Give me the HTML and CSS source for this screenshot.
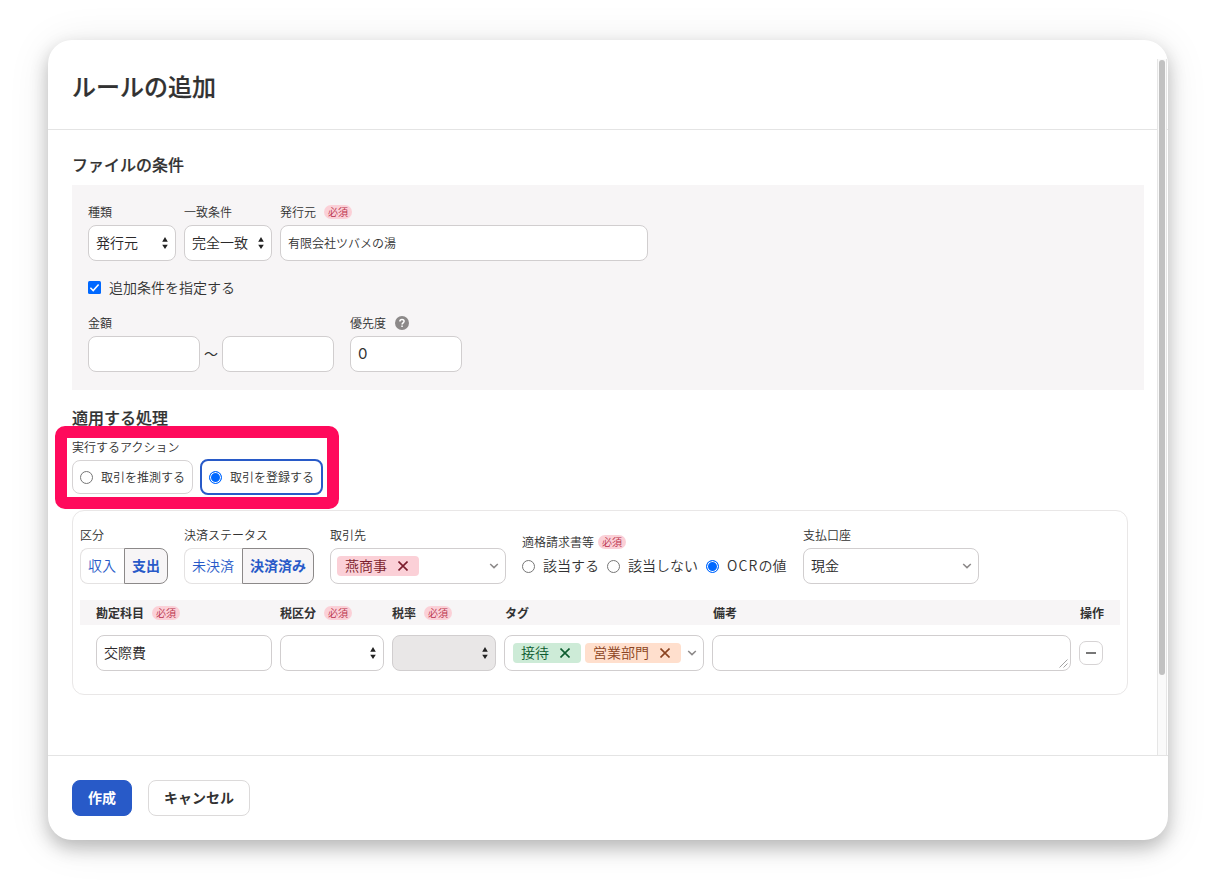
FILE: index.html
```html
<!DOCTYPE html>
<html lang="ja">
<head>
    <meta charset="UTF-8">
    <meta name="viewport" content="width=device-width, initial-scale=1.0">
    <title>ルールの追加</title>
    <link rel="stylesheet" href="styles.css">
</head>
<body>
    <svg width="0" height="0" class="icon-defs">
        <symbol id="sort" viewBox="0 0 6 12"><path d="M3 0L5.8 4.8H.2zM3 12L.2 7.7h5.6z" fill="#222"/></symbol>
        <symbol id="chevron" viewBox="0 0 10 6"><path d="M1.2 1L5 4.6 8.8 1" fill="none" stroke="#8c8989" stroke-width="1.5"/></symbol>
        <symbol id="close" viewBox="0 0 10 10"><path d="M.5.5l9 9M9.5.5l-9 9" fill="none" stroke="currentColor" stroke-width="1.6"/></symbol>
    </svg>

    <div class="modal">
        <div class="modal-header">
            <h1>ルールの追加</h1>
        </div>

        <div class="modal-body">
            <h2>ファイルの条件</h2>
            <div class="conditions">
                <div class="row">
                    <div class="field w88">
                        <div class="label">種類</div>
                        <div class="control select">発行元<svg class="sort"><use href="#sort"/></svg></div>
                    </div>
                    <div class="field w88">
                        <div class="label">一致条件</div>
                        <div class="control select">完全一致<svg class="sort"><use href="#sort"/></svg></div>
                    </div>
                    <div class="field w368">
                        <div class="label">発行元<span class="required">必須</span></div>
                        <div class="control small">有限会社ツバメの湯</div>
                    </div>
                </div>
                <div class="check">
                    <svg class="checkbox" viewBox="0 0 13 13"><rect width="13" height="13" rx="1.5" fill="#0068ff"/><path d="M2.4 6.8l2.8 2.8 5.4-6.2" fill="none" stroke="#fff" stroke-width="1.5"/></svg>
                    追加条件を指定する
                </div>
                <div class="row amount">
                    <div class="field w112">
                        <div class="label">金額</div>
                        <div class="control"></div>
                    </div>
                    <div class="tilde">～</div>
                    <div class="field w112">
                        <div class="label"></div>
                        <div class="control"></div>
                    </div>
                    <div class="field w112 priority">
                        <div class="label">優先度
                            <svg class="help" viewBox="0 0 14 14"><circle cx="7" cy="7" r="7" fill="#8c8989"/><path d="M4.9 5.5c0-1.3.9-2.1 2.1-2.1s2.1.8 2.1 1.9c0 1.5-2 1.6-2 3.1" fill="none" stroke="#fff" stroke-width="1.5"/><rect x="6.3" y="9.5" width="1.5" height="1.5" fill="#fff"/></svg>
                        </div>
                        <div class="control number">0</div>
                    </div>
                </div>
            </div>

            <h2 class="second">適用する処理</h2>
            <div class="action">
                <div class="action-label">実行するアクション</div>
                <div class="action-options">
                    <div class="option"><span class="radio"></span>取引を推測する</div>
                    <div class="option selected"><span class="radio on"></span>取引を登録する</div>
                </div>
                <div class="highlight"></div>
            </div>

            <div class="card">
                <div class="card-row">
                    <div class="field">
                        <div class="label">区分</div>
                        <div class="segment"><span>収入</span><span class="active">支出</span></div>
                    </div>
                    <div class="field">
                        <div class="label">決済ステータス</div>
                        <div class="segment wide"><span>未決済</span><span class="active">決済済み</span></div>
                    </div>
                    <div class="field w176">
                        <div class="label">取引先</div>
                        <div class="control combo">
                            <span class="tag red">燕商事<svg><use href="#close"/></svg></span>
                            <svg class="chevron"><use href="#chevron"/></svg>
                        </div>
                    </div>
                    <div class="field invoice">
                        <div class="label">適格請求書等<span class="required">必須</span></div>
                        <div class="radios">
                            <span class="radio"></span><span class="radio-text">該当する</span>
                            <span class="radio"></span><span class="radio-text">該当しない</span>
                            <span class="radio on"></span><span class="radio-text"><span class="latin">OCR</span>の値</span>
                        </div>
                    </div>
                    <div class="field w176">
                        <div class="label">支払口座</div>
                        <div class="control select account">現金<svg class="chevron"><use href="#chevron"/></svg></div>
                    </div>
                </div>

                <div class="grid grid-head">
                    <div>勘定科目<span class="required">必須</span></div>
                    <div>税区分<span class="required">必須</span></div>
                    <div>税率<span class="required">必須</span></div>
                    <div class="plain">タグ</div>
                    <div class="plain">備考</div>
                    <div class="plain">操作</div>
                </div>
                <div class="grid grid-line">
                    <div class="control account-item">交際費</div>
                    <div class="control select"><svg class="sort"><use href="#sort"/></svg></div>
                    <div class="control select disabled"><svg class="sort"><use href="#sort"/></svg></div>
                    <div class="control combo tags">
                        <span class="tag green">接待<svg><use href="#close"/></svg></span>
                        <span class="tag orange">営業部門<svg><use href="#close"/></svg></span>
                        <svg class="chevron"><use href="#chevron"/></svg>
                    </div>
                    <div class="control memo">
                        <svg class="resize" viewBox="0 0 9 9"><path d="M.5 8.5l8-8M4.5 8.5l4-4" stroke="#999" stroke-width=".9"/></svg>
                    </div>
                    <div class="remove"></div>
                </div>
            </div>
        </div>

        <div class="modal-footer">
            <div class="btn primary">作成</div>
            <div class="btn">キャンセル</div>
        </div>
        <div class="scrollbar"><div class="thumb"></div></div>
    </div>
</body>
</html>
```

FILE: styles.css
```css
* {
    box-sizing: border-box;
}
body {
    margin: 0;
    padding: 40px 48px 56px;
    height: 896px;
    overflow: hidden;
    background-color: #fff;
    color: #323232;
    font-family: "Noto Sans CJK JP", sans-serif;
    font-size: 14px;
    font-weight: 350;
    line-height: 20px;
    white-space: nowrap;
}
.icon-defs {
    position: absolute;
}
svg {
    display: block;
    flex-shrink: 0;
}
.modal {
    position: relative;
    display: flex;
    flex-direction: column;
    width: 1120px;
    height: 800px;
    border-radius: 24px;
    background-color: #fff;
    box-shadow: 0 8px 18px rgba(0, 0, 0, 0.24), 0 4px 44px rgba(0, 0, 0, 0.09);
}
.modal-header {
    height: 90px;
    padding: 28px 24px 0;
    border-bottom: 1px solid #e4e4e4;
}
h1, h2 {
    margin: 0;
    color: #323232;
    font-weight: 500;
    -webkit-text-stroke: 0.2px #323232;
}
h1 {
    font-size: 24px;
    line-height: 36px;
}
h2 {
    font-size: 16px;
    line-height: 24px;
}
.modal-body {
    height: 625px;
    padding: 22px 24px 0;
}
.conditions {
    height: 205px;
    margin-top: 9px;
    padding: 19px 16px 0;
    background-color: #f7f5f6;
}
.row {
    display: flex;
    gap: 8px;
}
.label {
    display: flex;
    align-items: center;
    height: 16px;
    margin-bottom: 5px;
    font-size: 12px;
    line-height: 16px;
}
.required {
    margin-left: 8px;
    padding: 0 4px;
    border-radius: 7px;
    background-color: #fbd0d7;
    color: #b8304a;
    font-size: 10px;
    font-weight: 350;
    line-height: 14px;
}
.control {
    display: flex;
    align-items: center;
    height: 36px;
    padding: 0 8px 1px;
    padding-left: 7px;
    border: 1px solid #d1cecf;
    border-radius: 8px;
    background-color: #fff;
}
.control.small {
    font-size: 12px;
}
.select, .account-item {
    padding-bottom: 2px;
    color: #2a2829;
}
.sort {
    width: 6px;
    height: 12px;
    margin: 1px -1px 0 auto;
}
.chevron {
    width: 10px;
    height: 6px;
    margin: 0 -2px 0 auto;
}
.number {
    font-family: Inter, sans-serif;
    font-size: 15px;
    font-weight: 400;
}
.w88 { width: 88px; }
.w112 { width: 112px; }
.w176 { width: 176px; }
.w368 { width: 368px; }

.check {
    display: flex;
    align-items: center;
    gap: 8px;
    height: 20px;
    margin-top: 16px;
}
.checkbox {
    width: 13px;
    height: 13px;
}
.amount {
    gap: 0;
    margin-top: 18px;
}
.tilde {
    width: 22px;
    padding-top: 28px;
    text-align: center;
    font-weight: 400;
}
.priority {
    margin-left: 16px;
}
.help {
    width: 14px;
    height: 14px;
    margin-left: 9px;
}

.second {
    margin-top: 15px;
}
.action {
    position: relative;
    height: 81px;
}
.action-label {
    padding-top: 9px;
    font-size: 12px;
    line-height: 17px;
}
.action-options {
    display: flex;
    align-items: center;
    gap: 7px;
    margin-top: 4px;
}
.option {
    display: flex;
    align-items: center;
    gap: 8px;
    width: 121px;
    height: 34px;
    padding-left: 7px;
    border: 1px solid #d6d3d4;
    border-radius: 8px;
    font-size: 12px;
}
.option.selected {
    width: 123px;
    height: 36px;
    border: 2px solid #285ac8;
}
.radio {
    width: 13px;
    height: 13px;
    flex-shrink: 0;
    border: 1px solid #767676;
    border-radius: 50%;
    background-color: #fff;
}
.radio.on {
    border-color: #0068ff;
    background-color: #0068ff;
    box-shadow: inset 0 0 0 1px #fff;
}
/* marker frame drawn over the action selector */
.highlight {
    position: absolute;
    top: -3px;
    left: -17px;
    width: 284px;
    height: 83px;
    border: 12px solid #ff0a5c;
    border-radius: 10px;
}

.card {
    width: 1056px;
    height: 185px;
    border: 1px solid #e9e7e7;
    border-radius: 12px;
    padding: 16px 7px 0;
}
.card-row {
    display: flex;
    gap: 16px;
}
.segment {
    display: flex;
    width: 88px;
    color: #285ac8;
}
.segment.wide {
    width: 130px;
}
.segment span {
    width: 44px;
    height: 36px;
    padding-left: 7px;
    border: 1px solid #e4e2e2;
    border-right: 0;
    border-radius: 8px 0 0 8px;
    line-height: 33px;
}
.segment .active {
    border: 1px solid #8c8989;
    border-radius: 0 8px 8px 0;
    background-color: #f7f5f6;
    font-weight: 700;
}
.segment.wide span {
    width: 58px;
}
.segment.wide .active {
    width: 72px;
}
.combo {
    padding-left: 6px;
}
.tag {
    display: flex;
    align-items: center;
    height: 20px;
    padding: 0 11px 1px 8px;
    border-radius: 4px;
}
.tag svg {
    width: 10px;
    height: 10px;
    margin: 1px 0 0 11px;
}
.red {
    background-color: #fbd0d7;
    color: #7b1c2c;
}
.green {
    background-color: #cdebd7;
    color: #0d5c2f;
}
.orange {
    background-color: #ffdfcd;
    color: #8b4320;
}
.invoice {
    width: 265px;
    padding-top: 7px;
}
.invoice .label {
    margin-bottom: 6px;
}
.invoice .required {
    margin-left: 4px;
}
.radios {
    display: flex;
    align-items: center;
    height: 20px;
}
.radio-text {
    margin: -2px 8px 0;
}
.radio-text:last-child {
    margin-right: 0;
}
.latin {
    letter-spacing: 1.2px;
}
.account {
    padding-right: 8px;
}
.account .chevron {
    margin-top: 1px;
}

.grid {
    display: grid;
    grid-template-columns: 176px 104px 104px 200px 359px 24px;
    column-gap: 8px;
    align-items: center;
    padding-left: 16px;
}
.grid-head {
    height: 25px;
    margin-top: 16px;
    background-color: #f7f5f6;
    font-size: 12px;
    font-weight: 700;
}
.grid-head > div {
    display: flex;
    align-items: center;
}
.grid-head .plain {
    padding-left: 1px;
}
.grid-line {
    margin-top: 10px;
}
.grid-line .control {
    min-width: 0;
}
.grid-line .disabled {
    background-color: #e9e7e7;
}
.tags {
    gap: 4px;
    padding-left: 8px;
}
.memo {
    align-items: flex-end;
    justify-content: flex-end;
    padding: 0 2px 2px;
}
.resize {
    width: 9px;
    height: 9px;
}
.remove {
    display: flex;
    align-items: center;
    justify-content: center;
    width: 24px;
    height: 24px;
    border: 1px solid #d6d3d4;
    border-radius: 7px;
}
.remove::before {
    content: "";
    width: 10px;
    height: 2px;
    background-color: #777;
}

.modal-footer {
    display: flex;
    gap: 16px;
    height: 85px;
    padding: 24px 24px 0;
    border-top: 1px solid #e4e4e4;
}
.btn {
    width: 102px;
    height: 36px;
    border: 1px solid #dcdada;
    border-radius: 8px;
    font-weight: 700;
    line-height: 33px;
    text-align: center;
}
.btn.primary {
    width: 60px;
    border-color: #285ac8;
    background-color: #285ac8;
    color: #fff;
}
.scrollbar {
    position: absolute;
    top: 19px;
    right: 1px;
    width: 10px;
    height: 696px;
    padding: 1px;
    border: 1px solid #e6e6e6;
    border-width: 0 1px;
    background-color: #fafafa;
}
.thumb {
    width: 6px;
    height: 615px;
    border-radius: 3px;
    background-color: #c1c1c1;
}
```
